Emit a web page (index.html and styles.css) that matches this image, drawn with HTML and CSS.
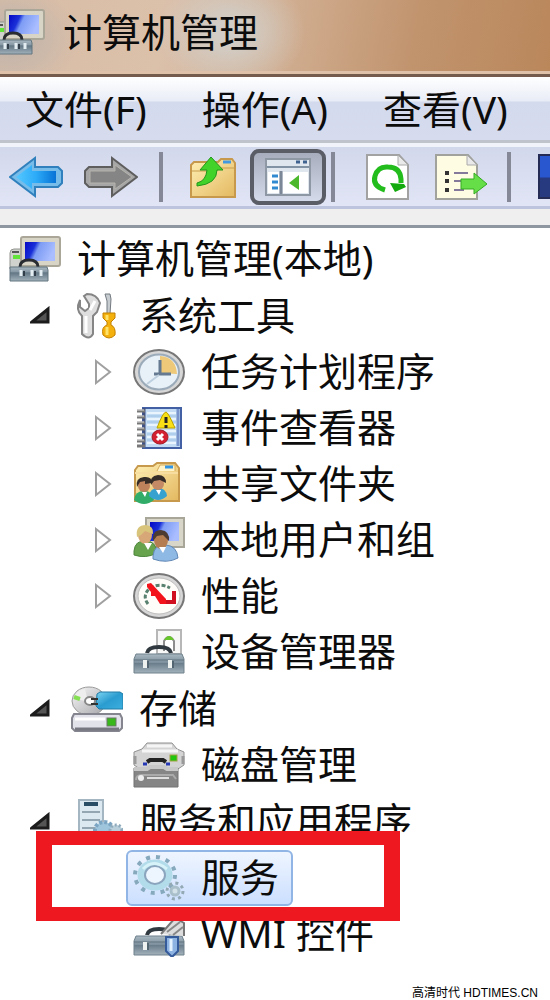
FILE: index.html
```html
<!DOCTYPE html>
<html lang="zh-CN">
<head>
<meta charset="utf-8">
<meta name="viewport" content="width=device-width">
<title>计算机管理</title>
<link rel="stylesheet" href="styles.css">
</head>
<body>
<svg class="defs" width="0" height="0" aria-hidden="true">
  <defs>
    <linearGradient id="screen" x1="0" y1="0" x2="1" y2="0.3"><stop offset="0" stop-color="#0508c4"/><stop offset=".35" stop-color="#1a30d8"/><stop offset=".5" stop-color="#7d9cf4"/><stop offset="1" stop-color="#a9bdff"/></linearGradient>
    <linearGradient id="steel" x1="0" y1="0" x2="0" y2="1"><stop offset="0" stop-color="#a9b8c2"/><stop offset=".45" stop-color="#7e909d"/><stop offset=".5" stop-color="#6b7e8b"/><stop offset="1" stop-color="#a3b3bd"/></linearGradient>
    <linearGradient id="folder" x1="0" y1="0" x2="1" y2="1"><stop offset="0" stop-color="#fff0b5"/><stop offset="1" stop-color="#e3b860"/></linearGradient>
    <linearGradient id="silver" x1="0" y1="0" x2="1" y2="1"><stop offset="0" stop-color="#f8f8f8"/><stop offset="1" stop-color="#a5a5aa"/></linearGradient>
    <linearGradient id="blue" x1="0" y1="0" x2="1" y2="0"><stop offset="0" stop-color="#55c8ff"/><stop offset=".5" stop-color="#2cabf8"/><stop offset="1" stop-color="#0773d6"/></linearGradient>
    <linearGradient id="cyan" x1="0" y1="0" x2="1" y2="1"><stop offset="0" stop-color="#7fd5f2"/><stop offset=".5" stop-color="#2a9cd0"/><stop offset="1" stop-color="#3db0df"/></linearGradient>
    <symbol id="computer" viewBox="0 0 52 46">
      <path d="M1 17q0-4 4-4h7v20H1z" fill="#cfd2cd" stroke="#92958f"/><path d="M3 16h7" stroke="#555" stroke-width="2"/><path d="M4 21h9" stroke="#61e339" stroke-width="4"/>
      <rect x="12" y="1" width="39" height="29" rx="2" fill="#d8d5c7" stroke="#aaa798" stroke-width="2"/>
      <rect x="16" y="6" width="30" height="19" fill="url(#screen)"/>
      <path d="M11 31q0-7 9-7t9 7" fill="none" stroke="#292d32" stroke-width="3"/>
      <path d="M1 31h37l1 3v11H1z" fill="url(#steel)" stroke="#61747f"/><path d="M1 37h38" stroke="#586d7b"/><path d="M12 34v6m11-6v6m9-6v6" stroke="#e3edf1" stroke-width="3"/><path d="M15 35v5m11-5v5" stroke="#323e49" stroke-width="2"/>
    </symbol>
    <symbol id="tools" viewBox="0 0 52 46">
      <path d="M9 7v7l5 4 4-3v-4l-5-8 3-2q10 0 13 9l-3 9-4 4v18q-4 7-11 0V23Q4 17 9 7z" fill="#dedede" stroke="#858585" stroke-width="2"/><path d="M15 23v17M24 8l-5 9" stroke="#fff" stroke-width="3"/>
      <path d="M34 1h5l1 5-1 15h-3V8z" fill="#c7ccd0" stroke="#737a80"/><path d="M32 20h12v5l-4 4v3q5 2 4 10-6 6-12 0-2-8 4-10v-3l-4-4z" fill="#f4b10d" stroke="#c48100"/><path d="M36 22v5m0 7v8" stroke="#ffe269" stroke-width="3"/>
    </symbol>
    <symbol id="clock" viewBox="0 0 52 46">
      <ellipse cx="26" cy="23" rx="25" ry="22" fill="#d7d7d7" stroke="#777" stroke-width="2"/><ellipse cx="26" cy="23" rx="20" ry="17.500" fill="#e9f1f8" stroke="#9cabb9" stroke-width="2"/>
      <path d="M27 24V7q16 1 17 18z" fill="#edc979"/><path d="M27 11v15M21 25h17" fill="none" stroke="#657a90" stroke-width="3"/><path d="M26 26L14 35" stroke="#bed0df" stroke-width="2"/>
    </symbol>
    <symbol id="log" viewBox="0 0 52 46">
      <path d="M10 3h38v40H10z" fill="#c4ddf5" stroke="#4460a5" stroke-width="2"/><path d="M45 4v37" stroke="#7994ca" stroke-width="3"/>
      <path d="M14 8h29M14 14h29M14 20h29M14 26h29M14 32h29M14 38h29" stroke="#e9f4fd" stroke-width="2"/><path d="M14 11h29M14 17h29M14 29h29M14 35h29" stroke="#9bc0e4"/>
      <path d="M11 3v39" stroke="#405080" stroke-width="3"/><path d="M4 6h8M4 12h8M4 18h8M4 24h8M4 30h8M4 36h8M4 41h8" stroke="#777" stroke-width="3"/><path d="M4 5h7M4 11h7M4 17h7M4 23h7M4 29h7M4 35h7" stroke="#ddd"/>
      <path d="M33 7q2 0 9 16h-18q6-16 9-16z" fill="#f8df16" stroke="#baa200"/><path d="M33 12v6m0 2v3" stroke="#252525" stroke-width="3"/>
      <ellipse cx="27" cy="32" rx="8" ry="7" fill="#d42131" stroke="#a31b25"/><path d="M24 29l6 6m0-6l-6 6" stroke="#fff" stroke-width="3"/>
    </symbol>
    <symbol id="shared" viewBox="0 0 52 46">
      <path d="M2 9l3-4h15l4-3h18l4 5v33H2z" fill="url(#folder)" stroke="#c6994c" stroke-width="2"/><path d="M24 10l3-6h15v6" fill="#fff4c9" stroke="#d4ab5b"/><path d="M32 6h8" stroke="#3295e3" stroke-width="3"/>
      <path d="M2 12h43" stroke="#f8dda0" stroke-width="2"/>
      <path d="M1 39q1-9 10-9t10 9q-10 8-20 0z" fill="#31ad69"/><path d="M16 35q1-8 9-8t9 8q-9 8-18 0z" fill="#37a2d0"/>
      <circle cx="11" cy="25" r="6" fill="#bd815c"/><circle cx="25" cy="23" r="6" fill="#c38a65"/><path d="M4 26q-2-9 7-10 8-1 8 6l-7 1v-3l-5 1zM18 24q-2-9 7-10 8 0 8 8l-6-3-6 1z" fill="#352b27"/><path d="M9 31l3 5 2-5m9-2l3 5 2-5" fill="#fff"/>
    </symbol>
    <symbol id="users" viewBox="0 0 52 46">
      <path d="M13 1h38v29H13z" fill="#d8d6c8" stroke="#a7a698" stroke-width="2"/><path d="M17 5h29v19H17z" fill="url(#screen)"/>
      <path d="M1 34q1-11 12-10 10 0 11 12-11 6-23 2z" fill="#67a34d" stroke="#4d863b"/><path d="M20 39q1-12 13-11 11 1 12 13-11 6-25 1z" fill="#8fb9e5" stroke="#6087b5"/>
      <ellipse cx="12" cy="18" rx="7" ry="9" fill="#d8a778"/><path d="M4 20Q2 8 13 8q8 1 7 9l-8-3-4 4z" fill="#d8c47a"/><ellipse cx="28" cy="23" rx="7" ry="9" fill="#b57d52"/><path d="M20 24q-1-11 8-11 9 1 8 11l-6-6-6 1z" fill="#4d3b31"/><path d="M11 26l4 7 4-7m7 4l4 6 3-6" fill="#fff"/>
    </symbol>
    <symbol id="gauge" viewBox="0 0 52 46">
      <ellipse cx="26" cy="23" rx="25" ry="22" fill="#d7d7d7" stroke="#777" stroke-width="2"/><ellipse cx="26" cy="23" rx="21" ry="18" fill="#fffdfa" stroke="#bdbdbd"/>
      <path d="M15 31q-6-8 1-15 10-7 21-1" fill="none" stroke="#59816f" stroke-width="3" stroke-dasharray="4 2"/><path d="M41 18v11h-8" fill="none" stroke="#d01020" stroke-width="4"/>
      <path d="M14 11l4-1 15 16v5h-6l-5-8h-4v-4l-4-5z" fill="#f3131b"/>
    </symbol>
    <symbol id="toolbox" viewBox="0 0 52 46">
      <path d="M14 24q1-6 12-6t12 6" fill="none" stroke="#313940" stroke-width="4"/>
      <path d="M3 25h46l2 5v14H1V30z" fill="url(#steel)" stroke="#6e818c"/><path d="M1 31h50" stroke="#5e727f"/><path d="M12 31v8m25-8v8" stroke="#edf1ef" stroke-width="4"/><path d="M15 32v7m25-7v7" stroke="#536570" stroke-width="2"/>
    </symbol>
    <symbol id="device" viewBox="0 0 52 46">
      <path d="M24 1h24v24H24z" fill="#f7f7f7" stroke="#b7b7b7" stroke-width="2"/><path d="M31 22V12q5-8 10 0v10" fill="#fff" stroke="#8d8d8d" stroke-width="2"/><path d="M31 11q5-8 10 0z" fill="#67c62b"/><use href="#toolbox"/>
    </symbol>
    <symbol id="storage" viewBox="0 0 52 46">
      <ellipse cx="18" cy="15" rx="17" ry="14" fill="url(#silver)" stroke="#9a9a9a"/><path d="M3 12l14 4-3-13q-8 1-11 9z" fill="#eee"/><path d="M3 11l6 2" stroke="#84df52" stroke-width="4"/><ellipse cx="19" cy="15" rx="5" ry="4" fill="#fff" stroke="#888" stroke-width="2"/>
      <path d="M26 8l3-2h20l3 2v15H28l-3-3z" fill="url(#cyan)" stroke="#237ba5"/><path d="M20 13h7m-7 5h7" stroke="#333" stroke-width="2"/>
      <path d="M3 28h46l2 4v10l-3 3H4l-3-3V32z" fill="#e2e2eb" stroke="#85858f" stroke-width="2"/><path d="M4 43h44" stroke="#777781" stroke-width="3"/><path d="M4 33h30" stroke="#fff" stroke-width="3"/><rect x="36" y="32" width="9" height="8" fill="#37b719" stroke="#6d766b"/>
    </symbol>
    <symbol id="disk" viewBox="0 0 52 46">
      <path d="M1 23V10l8-3 5-6h25l5 6 7 3v13l-6 4H7z" fill="#d4d4d4" stroke="#919191"/><path d="M14 4h25M9 9h36" stroke="#f5f5f5" stroke-width="3"/><path d="M2 14v8M50 14v8" stroke="#999" stroke-width="3"/>
      <path d="M14 20l3-2h13l3 2" fill="none" stroke="#222" stroke-width="4"/><path d="M10 22h4m19 0h4" stroke="#2638b5" stroke-width="3"/><rect x="37" y="13" width="7" height="6" fill="#20c50d" stroke="#a0a040"/>
      <path d="M1 26h44v19H1z" fill="#858585" stroke="#727272"/><path d="M1 27h13l3-2h14l3 2h11" stroke="#c8c8c8" stroke-width="4" fill="none"/><path d="M3 38q0-5 6-5h31l3 4" fill="none" stroke="#aaa" stroke-width="2"/><circle cx="8" cy="36" r="3" fill="#eee"/><path d="M14 36h22" stroke="#ddd" stroke-width="2"/>
    </symbol>
    <symbol id="gears" viewBox="0 0 52 46">
      <ellipse cx="22" cy="20" rx="20" ry="18" fill="none" stroke="#86a9bd" stroke-width="4" stroke-dasharray="4 6"/><ellipse cx="22" cy="20" rx="14" ry="12" fill="none" stroke="#b2dcea" stroke-width="7"/><ellipse cx="22" cy="20" rx="10" ry="9" fill="#edf5ff" stroke="#8aa5bd" stroke-width="2"/>
      <path d="M10 14q10-11 24 0" stroke="#d7f2f8" stroke-width="3" fill="none"/>
      <circle cx="42" cy="36" r="8" fill="none" stroke="#93aab5" stroke-width="3" stroke-dasharray="3 3.300"/><circle cx="42" cy="36" r="4" fill="#d3e1e8" stroke="#a9c0ca" stroke-width="3"/>
    </symbol>
    <symbol id="server" viewBox="0 0 52 46">
      <path d="M8 1h24v44H8z" fill="#dce9f0" stroke="#a3b6c2" stroke-width="2"/><path d="M13 5h14" stroke="#284d65" stroke-width="4"/><path d="M11 13h18M11 21h18M11 29h18" stroke="#94a6b1" stroke-width="2"/>
      <ellipse cx="33" cy="31" rx="9" ry="8" fill="#9fc5dd" stroke="#7aa4c2" stroke-width="4" stroke-dasharray="3 2"/><ellipse cx="45" cy="31" rx="6" ry="5" fill="#b9cfdb" stroke="#8fabbc" stroke-width="3" stroke-dasharray="2 2"/>
    </symbol>
    <symbol id="wmi" viewBox="0 0 52 46">
      <use href="#toolbox"/><path d="M28 23L42 7l9 5v13" fill="#ddd" stroke="#777" stroke-width="2"/><path d="M34 21l13-10m-7 13l10-8" stroke="#888" stroke-width="2"/>
      <path d="M33 26h12v14l-6 6-6-6z" fill="#8db3e3" stroke="#355b9b" stroke-width="2"/><path d="M38 28v12" stroke="#e4f2ff" stroke-width="3"/>
    </symbol>
    <symbol id="open" viewBox="0 0 20 20"><path d="M2 16L18 3v13z" fill="#555" stroke="#1c1c1c" stroke-width="3"/></symbol>
    <symbol id="closed" viewBox="0 0 20 26"><path d="M4 2l14 11L4 24z" fill="#fff" stroke="#a0a0a0" stroke-width="2"/></symbol>
  </defs>
</svg>

<header class="titlebar">
  <svg class="title-icon" viewBox="7 0 45 46" aria-hidden="true"><use href="#computer" width="52" height="46"/></svg>
  <h1 class="title">计算机管理</h1>
</header>

<nav class="menubar" aria-label="菜单">
  <button class="menu">文件(F)</button>
  <button class="menu">操作(A)</button>
  <button class="menu">查看(V)</button>
</nav>

<div class="toolbar" role="toolbar" aria-label="工具栏">
  <button class="tool" aria-label="后退"><svg width="54" height="44" viewBox="0 0 54 44"><path d="M1 22L26 3v9h23l4 4v12l-4 4H26v9z" fill="#78bce9" stroke="#2f80bd" stroke-width="2"/><path d="M7 22L23 10v6h24v12H23v6z" fill="url(#blue)"/></svg></button>
  <button class="tool" aria-label="前进"><svg width="54" height="44" viewBox="0 0 54 44"><path d="M53 22L28 3v9H5l-4 4v12l4 4h23v9z" fill="#a6a6a6" stroke="#5e5e5e" stroke-width="2"/><path d="M48 22L31 10v6H6v12h25v6z" fill="#858585" stroke="#b5b3ad"/></svg></button>
  <span class="divider"></span>
  <button class="tool tool-folder" aria-label="上移"><svg width="48" height="44" viewBox="0 0 48 44"><path d="M2 10l3-3h24l3-3h11l3 4v34H2z" fill="url(#folder)" stroke="#c7994c" stroke-width="2"/><path d="M3 16h24l5-3h13" stroke="#c79d4d" fill="none"/><path d="M34 7h8" stroke="#4199df" stroke-width="3"/><path d="M8 28q9-2 10-13h-7L22 2l12 13h-6q0 14-20 16z" fill="#42d32a" stroke="#23961c"/></svg></button>
  <button class="tool tool-pressed" aria-label="显示/隐藏控制台树" aria-pressed="true"><svg width="46" height="38" viewBox="0 0 46 38"><path d="M1 1h44v36H1z" fill="#dfe6ee" stroke="#8e98a4" stroke-width="2"/><path d="M2 9h42" stroke="#8292a5" stroke-width="2"/><path d="M31 4h4m3 0h4" stroke="#3f638e" stroke-width="3"/><path d="M3 14h11v21H3z" fill="#fff"/><path d="M16 13v23" stroke="#7b8797" stroke-width="3"/><path d="M18 14h25v21H18z" fill="#fff"/><path d="M7 18h6m-6 6h6m-6 6h6" stroke="#328bd1" stroke-width="3"/><path d="M34 17v15l-10-7z" fill="#4bb82c"/></svg></button>
  <span class="divider divider-tight"></span>
  <button class="tool tool-refresh" aria-label="刷新"><svg width="44" height="46" viewBox="0 0 44 46"><path d="M1 1h32l9 10v34H1z" fill="#fff" stroke="#a2a2a2" stroke-width="2"/><path d="M32 1v10h10z" fill="#e9e9e9" stroke="#aaa"/><path d="M19 36Q6 32 9 22q3-10 13-9 12 0 13 12v4" fill="none" stroke="#23bc1d" stroke-width="5"/><path d="M24 29l14 1 2 3-11 5z" fill="#13aa0e"/></svg></button>
  <button class="tool" aria-label="导出列表"><svg width="54" height="46" viewBox="0 0 54 46"><path d="M1 1h32l9 10v34H1z" fill="#fffce4" stroke="#a2a29c" stroke-width="2"/><path d="M32 1v10h10z" fill="#e9e9e9" stroke="#aaa"/><path d="M10 19h4m-4 8h4m-4 9h4" stroke="#333" stroke-width="4"/><path d="M19 19h14m-14 8h10m-10 9h10" stroke="#85799b" stroke-width="2"/><path d="M26 25h13v-6l13 11-13 10v-5H26z" fill="#66de47" stroke="#35ab23"/></svg></button>
  <span class="divider divider-last"></span>
  <button class="tool tool-help" aria-label="帮助"></button>
</div>
<div class="strip"></div>

<main class="content">
  <ul class="tree">
    <li>
      <div class="row"><a class="node" href="#root"><svg class="icon"><use href="#computer"/></svg><span>计算机管理(本地)</span></a></div>
      <ul class="branches">
        <li class="group">
          <div class="row"><button class="twisty" aria-label="折叠"><svg width="20" height="20"><use href="#open"/></svg></button><a class="node" href="#system"><svg class="icon"><use href="#tools"/></svg><span>系统工具</span></a></div>
          <ul class="leaves">
            <li class="row"><button class="twisty" aria-label="展开"><svg width="20" height="26"><use href="#closed"/></svg></button><a class="node" href="#tasks"><svg class="icon"><use href="#clock"/></svg><span>任务计划程序</span></a></li>
            <li class="row"><button class="twisty" aria-label="展开"><svg width="20" height="26"><use href="#closed"/></svg></button><a class="node" href="#events"><svg class="icon"><use href="#log"/></svg><span>事件查看器</span></a></li>
            <li class="row"><button class="twisty" aria-label="展开"><svg width="20" height="26"><use href="#closed"/></svg></button><a class="node" href="#folders"><svg class="icon"><use href="#shared"/></svg><span>共享文件夹</span></a></li>
            <li class="row"><button class="twisty" aria-label="展开"><svg width="20" height="26"><use href="#closed"/></svg></button><a class="node" href="#localusers"><svg class="icon"><use href="#users"/></svg><span>本地用户和组</span></a></li>
            <li class="row"><button class="twisty" aria-label="展开"><svg width="20" height="26"><use href="#closed"/></svg></button><a class="node" href="#performance"><svg class="icon"><use href="#gauge"/></svg><span>性能</span></a></li>
            <li class="row"><span class="twisty"></span><a class="node" href="#devices"><svg class="icon"><use href="#device"/></svg><span>设备管理器</span></a></li>
          </ul>
        </li>
        <li class="group">
          <div class="row"><button class="twisty" aria-label="折叠"><svg width="20" height="20"><use href="#open"/></svg></button><a class="node" href="#store"><svg class="icon"><use href="#storage"/></svg><span>存储</span></a></div>
          <ul class="leaves">
            <li class="row"><span class="twisty"></span><a class="node" href="#disks"><svg class="icon"><use href="#disk"/></svg><span>磁盘管理</span></a></li>
          </ul>
        </li>
        <li class="group">
          <div class="row"><button class="twisty" aria-label="折叠"><svg width="20" height="20"><use href="#open"/></svg></button><a class="node" href="#apps"><svg class="icon"><use href="#server"/></svg><span>服务和应用程序</span></a></div>
          <ul class="leaves">
            <li class="row marked"><span class="twisty"></span><a class="node node-selected" href="#services" aria-current="true"><svg class="icon"><use href="#gears"/></svg><span>服务</span></a></li>
            <li class="row"><span class="twisty"></span><a class="node" href="#wmicontrol"><svg class="icon"><use href="#wmi"/></svg><span>WMI 控件</span></a></li>
          </ul>
        </li>
      </ul>
    </li>
  </ul>
</main>
<footer class="credit">高清时代 HDTIMES.CN</footer>
</body>
</html>
```
FILE: styles.css
```css
*, *::after { box-sizing: border-box; }

body {
  margin: 0;
  min-height: 100vh;
  display: flex;
  flex-direction: column;
  overflow-x: hidden;
  background: #fff;
  color: #0c0c0c;
  font-family: "Noto Sans", "Noto Sans CJK SC", sans-serif;
  font-size: 39px;
}

button {
  border: 0;
  padding: 0;
  background: none;
  color: inherit;
  font: inherit;
}

ul { list-style: none; margin: 0; padding: 0; }
svg { display: block; flex: none; }
.defs { position: absolute; }

.titlebar {
  display: flex;
  align-items: center;
  gap: 18px;
  height: 77px;
  padding-bottom: 10px;
  border-bottom: 3px solid #745b4b;
  box-shadow: inset 0 -3px #dfc1a9;
  background:
    radial-gradient(ellipse 75px 60px at 230px 32px, #d2cdc6 20%, transparent),
    radial-gradient(ellipse 70px 55px at 10px 38px, #bcb3ad, transparent),
    linear-gradient(100deg, #d9bda6 0%, #dbc0aa 30%, #d0ad90 52%, #c1946e 75%, #ba875b 100%);
}
.title-icon { width: 45px; height: 46px; }
.title { margin: 0; font-size: 39px; font-weight: 400; line-height: 56px; }

.menubar {
  display: flex;
  align-items: center;
  gap: 55px;
  height: 66px;
  padding-left: 25px;
  border-bottom: 3px solid #bfc3cb;
  background: linear-gradient(#fff, #e8ecf6 24px, #d4daed 25px, #d6dcee);
}
.menu { white-space: nowrap; line-height: 56px; }

.toolbar {
  display: flex;
  align-items: center;
  height: 66px;
  padding-left: 9px;
  gap: 21px;
  border-top: 4px solid #f1f3fa;
  border-bottom: 3px solid #bdc4dd;
  background: linear-gradient(#d2d8eb, #e1e5f6);
  overflow: hidden;
}
.tool { flex: none; }
.divider { flex: none; width: 4px; height: 50px; margin-right: 5px; background: #858997; }
.tool-folder { margin-right: -8px; }
.tool-pressed {
  display: grid;
  place-items: center;
  width: 76px;
  height: 56px;
  border: 4px solid #5a5d66;
  border-radius: 9px;
  background: linear-gradient(#a7adbd, #d5daea);
}
.divider-tight { margin: 0 10px 0 -16px; }
.tool-refresh { margin-right: 4px; }
.divider-last { margin: 0 6px 0 -3px; }
.tool-help { width: 54px; height: 45px; border: 2px solid #242c55; background: linear-gradient(#2857cf 50%, #27397f 55%); }

.strip { height: 19px; border-bottom: 3px solid #8e979f; background: #efefef; }

.content { flex: 1; padding-top: 3px; }
.tree { padding-left: 2px; }
.branches { padding-left: 28px; }
.leaves { padding-left: 62px; }
.group { padding-top: 1px; }

.row { display: flex; align-items: center; gap: 14px; height: 56px; }
.twisty { flex: none; width: 20px; }
.node {
  display: flex;
  align-items: center;
  gap: 16px;
  height: 56px;
  padding: 0 12px 0 5px;
  border: 2px solid transparent;
  border-radius: 6px;
  color: inherit;
  line-height: 50px;
  text-decoration: none;
  white-space: nowrap;
}
.icon { width: 52px; height: 46px; }
.node > span { padding-bottom: 2px; }
.node-selected { border-color: #91b5e4; background: linear-gradient(#eff5ff, #cbdfff); }

/* Red frame that lies over the neighbouring rows */
.marked { position: relative; }
.marked::after {
  content: "";
  position: absolute;
  inset: -19px auto -15px -56px;
  width: 364px;
  border: solid #ee1820;
  border-width: 14px 16px;
  pointer-events: none;
  z-index: 1;
}

.credit {
  padding: 0 12px 0 0;
  color: #000;
  font-family: "Liberation Sans", "Noto Sans CJK SC", sans-serif;
  font-size: 12px;
  line-height: 14px;
  text-align: right;
}
```
